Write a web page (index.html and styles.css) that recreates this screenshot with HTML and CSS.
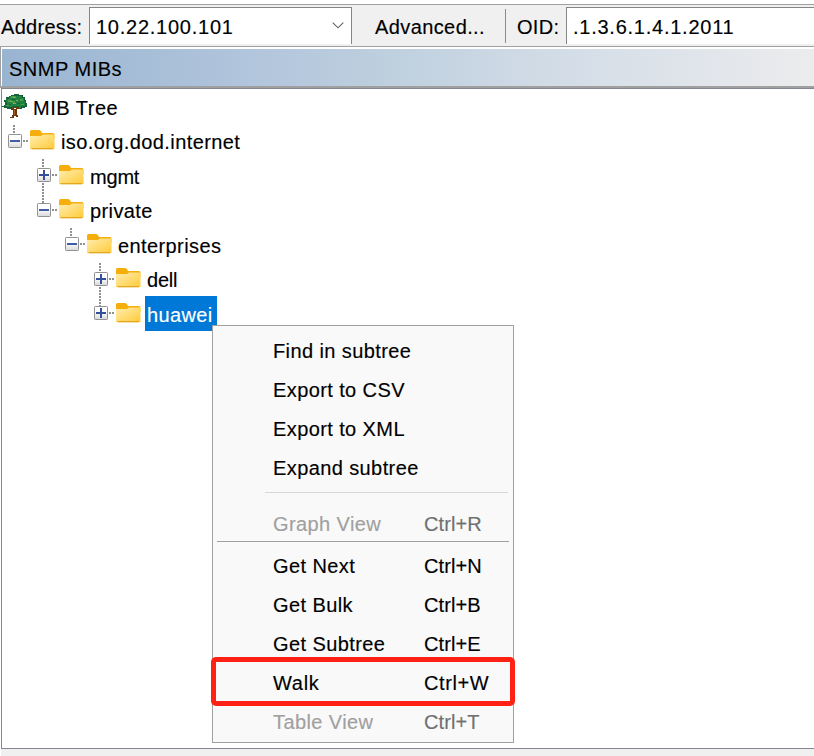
FILE: index.html
```html
<!DOCTYPE html>
<html lang="en">
<head>
<meta charset="utf-8">
<title>SNMP MIBs</title>
<link rel="stylesheet" href="styles.css">
</head>
<body>
<svg class="defs" width="0" height="0" aria-hidden="true">
  <defs>
    <linearGradient id="folderFill" x1="0" y1="0" x2="1" y2="1"><stop offset="0" stop-color="#ffeeb0"/><stop offset="1" stop-color="#ffca38"/></linearGradient>
    <linearGradient id="boxFill" x1="0" y1="0" x2="0" y2="1"><stop offset="0.4" stop-color="#fff"/><stop offset="1" stop-color="#d8d8d8"/></linearGradient>
    <symbol id="folder" viewBox="0 0 25 20">
      <path d="M0 7V1.500Q0 0 1.500 0H9Q10.500 0 11.500 2L12 3H23Q24.500 3 24.500 5V9H0Z" fill="#f5ae0b"/>
      <path d="M0 6H11L13 4.500H24.500V19H0Z" fill="url(#folderFill)"/>
      <path d="M1.500 18.700H23" stroke="#e3a51e" stroke-width="1.300"/>
    </symbol>
    <symbol id="minus" viewBox="0 0 14 14">
      <rect x=".5" y=".5" width="13" height="13" rx=".8" fill="url(#boxFill)" stroke="#929292"/>
      <path d="M2 7H12" stroke="#405ca5" stroke-width="2"/>
    </symbol>
    <symbol id="plus" viewBox="0 0 14 14">
      <rect x=".5" y=".5" width="13" height="13" rx=".8" fill="url(#boxFill)" stroke="#929292"/>
      <path d="M2 7H12M7 2V12" stroke="#34509a" stroke-width="2"/>
    </symbol>
  </defs>
</svg>
<div class="toolbar">
  <span class="address-label">Address:</span>
  <div class="address"><span>10.22.100.101</span>
    <svg width="12" height="7" viewBox="0 0 12 7"><path d="M.7 .7L6 5.800L11.300 .7" fill="none" stroke="#606060" stroke-width="1.100"/></svg>
  </div>
  <span class="advanced">Advanced...</span>
  <span class="divider"></span>
  <span class="oid-label">OID:</span>
  <div class="oid">.1.3.6.1.4.1.2011</div>
</div>
<div class="panel-title"><span>SNMP MIBs</span></div>
<div class="tree">
  <div class="row root">
    <svg class="tree-icon" width="26" height="25" viewBox="0 0 26 25" shape-rendering="crispEdges">
      <path d="M9 1H12V0H17V1H21V3H23V6H24V9H25V13H23V14H20V15H16V14H10V15H5V14H2V13H0V12H2V11H3V8H2V6H4V3H7V2H9Z" fill="#17603c"/>
      <path d="M8 2H20V4H22V7H23V12H19V14H15V12H11V13H5V12H3V11H5V8H4V5H7V3H8Z" fill="#1f8040"/>
      <path d="M9 2H14V4H9ZM6 6H9V8H6ZM18 5H21V7H18ZM10 7H13V9H10ZM4 11H7V12H4ZM19 10H22V11H19Z" fill="#48a044"/>
      <path d="M11 3H13V4H11ZM8 7H10V8H8ZM11 9H14V10H11ZM14 6H16V7H14Z" fill="#91a66a"/>
      <path d="M10 5H13V6H10ZM15 9H18V10H15ZM7 10H9V11H7ZM14 12H17V14H14Z" fill="#0c6840"/>
      <path d="M9 13H12V15H14V13H17V15H15V21H16V23H14V22H12V24H8V23H10V21H11V16H9Z" fill="#70370c"/>
      <path d="M12 16H13V21H12Z" fill="#a35e25"/>
    </svg><span class="text">MIB Tree</span>
  </div>
  <div class="row l1"><span class="rail stub"></span><svg class="box"><use href="#minus"/></svg><i></i><svg class="folder"><use href="#folder"/></svg><span class="text">iso.org.dod.internet</span></div>
  <div class="row l2"><span class="rail long"></span><svg class="box"><use href="#plus"/></svg><i></i><svg class="folder"><use href="#folder"/></svg><span class="text tight">mgmt</span></div>
  <div class="row l2"><svg class="box"><use href="#minus"/></svg><i></i><svg class="folder"><use href="#folder"/></svg><span class="text">private</span></div>
  <div class="row l3"><span class="rail stub"></span><svg class="box"><use href="#minus"/></svg><i></i><svg class="folder"><use href="#folder"/></svg><span class="text">enterprises</span></div>
  <div class="row l4"><span class="rail long"></span><svg class="box"><use href="#plus"/></svg><i></i><svg class="folder"><use href="#folder"/></svg><span class="text tight">dell</span></div>
  <div class="row l4"><svg class="box"><use href="#plus"/></svg><i></i><svg class="folder"><use href="#folder"/></svg><span class="text selected">huawei</span></div>
</div>
<div class="footer"></div>
<div class="menu">
  <div class="item">Find in subtree</div>
  <div class="item">Export to CSV</div>
  <div class="item">Export to XML</div>
  <div class="item">Expand subtree</div>
  <div class="sep light"></div>
  <div class="item disabled"><span>Graph View</span><kbd>Ctrl+R</kbd></div>
  <div class="sep"></div>
  <div class="item"><span>Get Next</span><kbd>Ctrl+N</kbd></div>
  <div class="item"><span>Get Bulk</span><kbd>Ctrl+B</kbd></div>
  <div class="item"><span>Get Subtree</span><kbd>Ctrl+E</kbd></div>
  <div class="item walk"><span>Walk</span><kbd>Ctrl+W</kbd><div class="highlight"></div></div>
  <div class="item disabled"><span>Table View</span><kbd>Ctrl+T</kbd></div>
</div>
</body>
</html>
```
FILE: styles.css
```css
* { box-sizing: border-box; }
body { margin: 0; width: 814px; height: 756px; overflow: hidden; position: relative; display: flex; flex-direction: column; background: #fff; color: #000; font: 20px/24px "Liberation Sans", Arial, sans-serif; letter-spacing: .4px; white-space: nowrap; -webkit-text-stroke: .15px currentColor; }
svg { display: block; flex: none; }
.defs { position: absolute; }
.toolbar { height: 43px; margin-top: 4px; flex: none; display: flex; align-items: flex-start; background: #f0f0f0; border-top: 1px solid #a0a0a0; border-bottom: 1px solid #a0a0a0; }
.toolbar > span { flex: none; margin-top: 10px; }
.address-label { width: 88px; padding-left: 1px; letter-spacing: .3px; }
.address { width: 263px; height: 37px; margin: 2px 0 0 1px; flex: none; display: flex; justify-content: space-between; align-items: center; padding: 1px 7px 0 6px; background: #fff; border: 1px solid #858585; border-bottom: 0; letter-spacing: .75px; }
.address svg { margin-bottom: 3px; }
.advanced { width: 130px; margin-left: 23px; letter-spacing: .4px; }
.toolbar .divider { width: 1px; height: 34px; margin-top: 4px; background: #8c8c8c; }
.oid-label { width: 49px; margin-left: 11px; letter-spacing: .3px; }
.oid { flex: 1; height: 37px; margin-top: 2px; padding: 7px 0 0 6px; background: #fff; border: 1px solid #858585; border-width: 1px 0 0 1px; letter-spacing: .75px; }
.panel-title { flex: none; height: 41px; padding: 2px 0 0 1px; border-left: 1px solid #a0a0a0; border-bottom: 2px solid #a0a0a0; letter-spacing: .5px; }
.panel-title span { display: block; height: 37px; padding: 8px 0 0 7px; background: linear-gradient(90deg, #99b4d1, #b4c7dd 34%, #bccedd 45%, #d2dce7 68%, #ececed); }
.tree { height: 661px; flex: none; border: 1px solid #828790; border-right: 0; margin-left: 1px; }
.row { position: relative; height: 34.500px; display: flex; align-items: center; }
.row .text { height: 35px; padding: 7px 4px 0 2px; }
.root { letter-spacing: .5px; }
.box { position: relative; width: 14px; height: 14px; }
.folder { width: 25px; height: 20px; margin-top: -1px; }
.row i { width: 5px; height: 2px; margin: 0 2px 0 1px; background: repeating-linear-gradient(90deg, #909090 0 2px, transparent 2px 3px); }
.row .folder + .text { margin-left: 4px; }
.tree-icon { margin: 1px 3px 0 0; }
.l1 { padding-left: 6px; }
.l2 { padding-left: 35px; }
.l3 { padding-left: 63px; }
.l4 { padding-left: 92px; }
.rail { position: absolute; width: 2px; margin-left: 5px; background: repeating-linear-gradient(#909090 0 2px, transparent 2px 3px); }
.stub { top: 1px; height: 10px; }
.long { top: 1px; height: 44px; }
.row .tight { letter-spacing: -.2px; }
.row .selected { color: #fff; background: #0078d7; letter-spacing: .35px; padding-right: 5px; }
.footer { height: 7px; flex: none; margin-left: 1px; background: #f0f0f0; }
.menu { position: absolute; left: 212px; top: 325px; width: 302px; height: 418px; padding-top: 6px; background: #f9f9f9; border: 1px solid #a0a0a0; }
.item { position: relative; height: 39px; display: flex; padding: 7px 0 0 60px; }
.item span { width: 151px; }
kbd { font: inherit; letter-spacing: .1px; }
.walk { letter-spacing: .7px; }
.walk kbd { letter-spacing: .6px; }
.sep { height: 1px; margin: -3px 4px 5px; background: #a0a0a0; }
.sep.light { margin: 4px 5px 12px 52px; background: #d7d7d7; }
.disabled { color: #a0a0a0; }
.disabled kbd { color: #707070; }
.highlight { position: absolute; left: -2px; top: -7px; width: 304px; height: 49px; border: 5px solid #ff2114; border-radius: 5px; }
```
